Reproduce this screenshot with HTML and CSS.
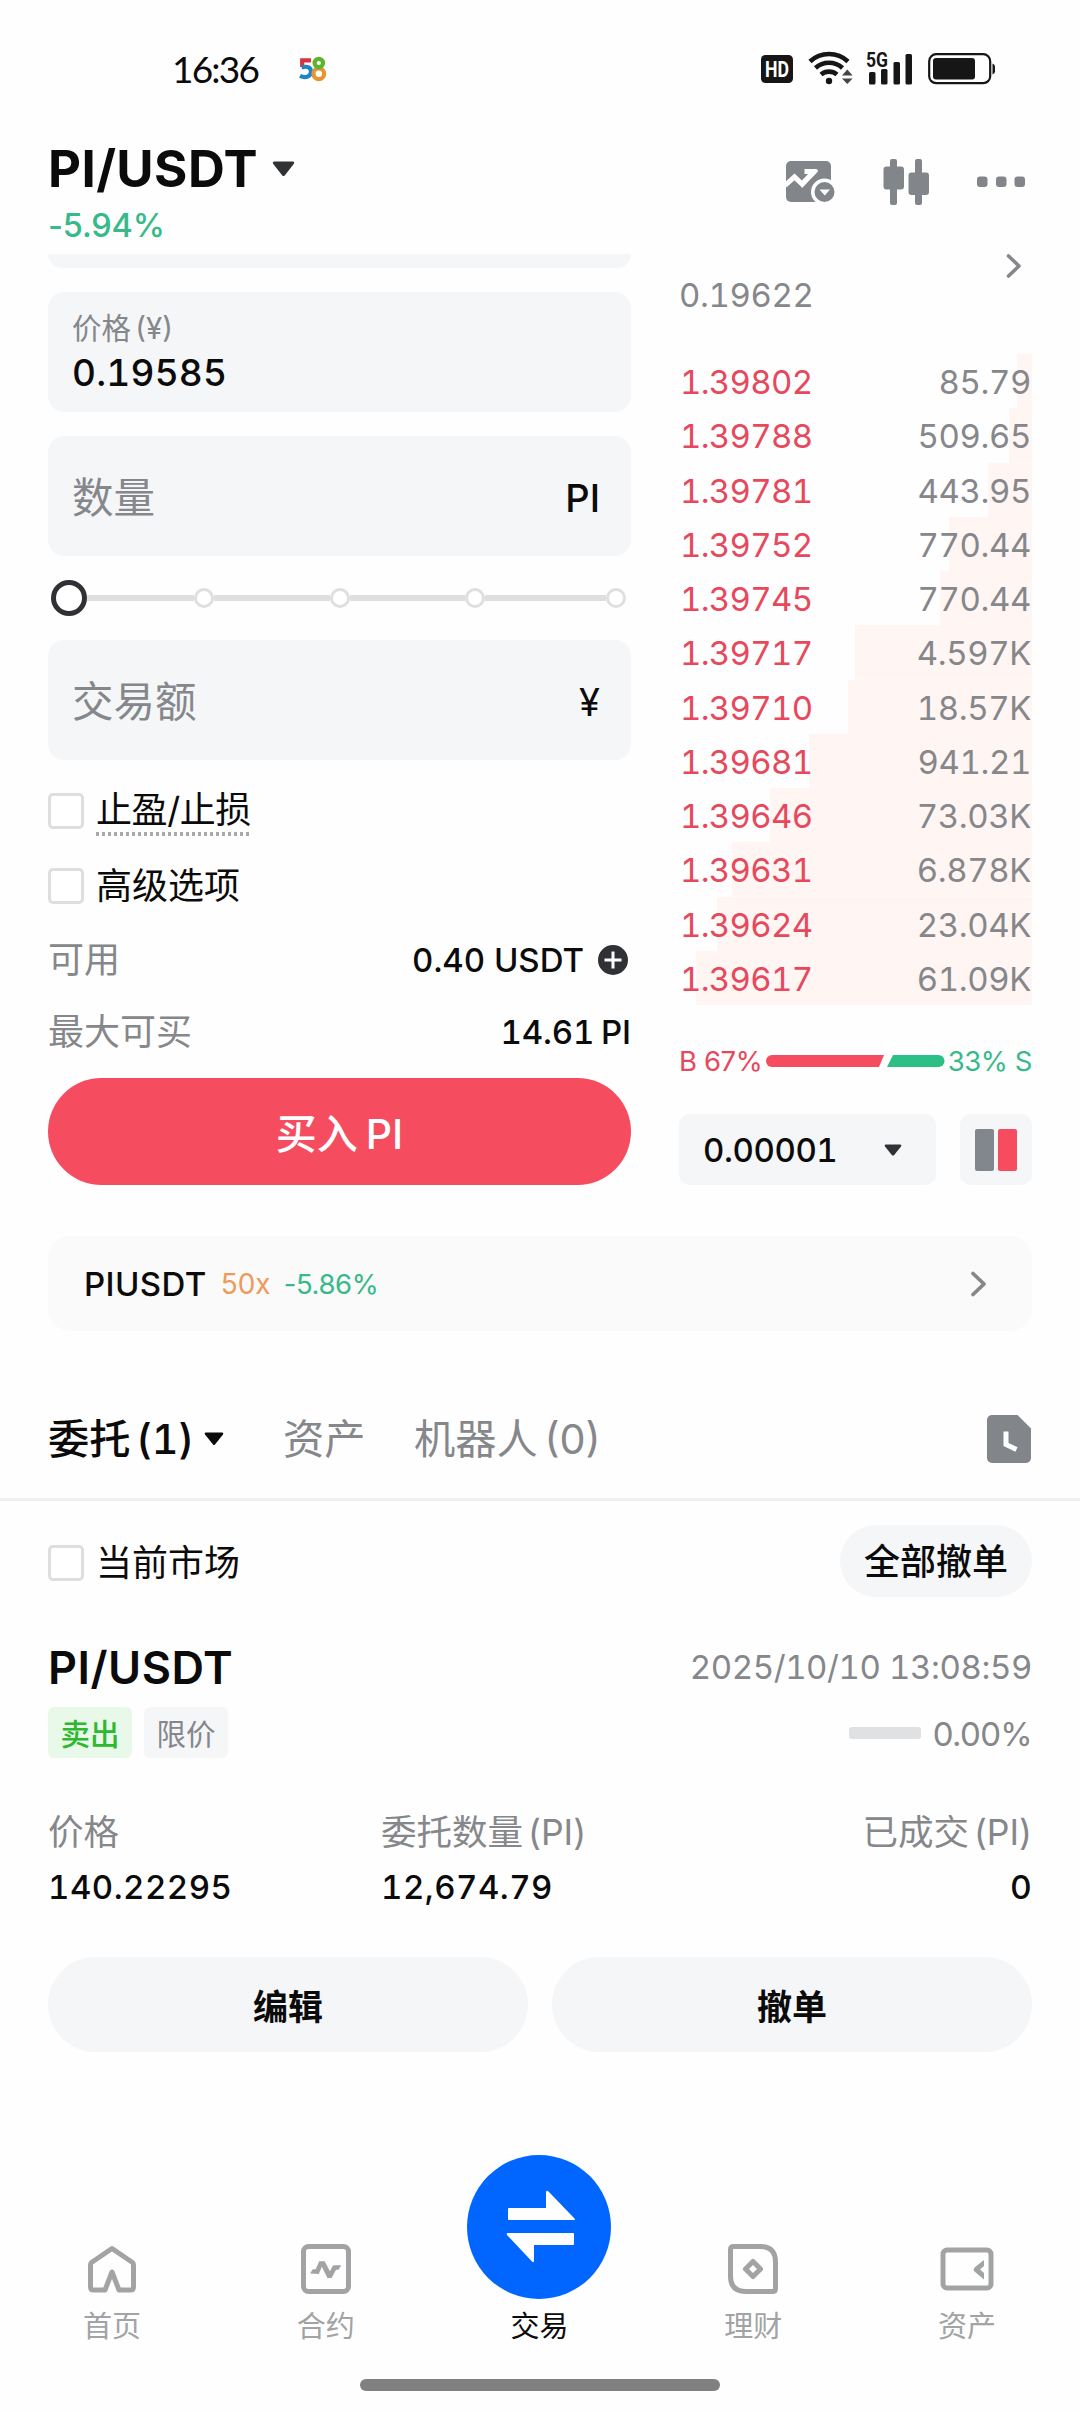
FILE: index.html
```html
<!DOCTYPE html>
<html lang="zh-CN">
<head>
<meta charset="utf-8">
<title>PI/USDT</title>
<link rel="stylesheet" href="styles.css">
</head>
<body>
<div class="status">
  <span class="clock">16:36</span>
  <svg class="app58" width="28" height="26" viewBox="0 0 28 26" fill="none" stroke-width="4.2">
    <path d="M12 4.300H3.200V11" stroke="#d9333f"/>
    <path d="M2.600 11.600c6-2.200 9.400.4 9.400 4.200 0 5.200-6.200 6.400-11 4" stroke="#1d84c6"/>
    <circle cx="19.800" cy="17.800" r="5.300" stroke="#ea9430"/>
    <circle cx="19.800" cy="7" r="4.200" stroke="#5db52f"/>
  </svg>
  <div class="status-icons">
    <svg class="hd" width="32" height="28" viewBox="0 0 32 28"><rect width="32" height="28" rx="4.500" fill="#161616"/><text x="4" y="22.300" textLength="24" lengthAdjust="spacingAndGlyphs">HD</text></svg>
    <svg class="wifi" width="46" height="36" viewBox="0 0 46 36">
      <g fill="none" stroke="#161616" stroke-width="4.600">
        <path d="M2 12.500a28 28 0 0 1 38 0"/>
        <path d="M7.500 19a20 20 0 0 1 27 0"/>
        <path d="M13 25.500a12.500 12.500 0 0 1 16 0"/>
      </g>
      <circle cx="21" cy="32" r="3.200" fill="#161616"/>
      <path d="M34 26.500l5.300-6 5.300 6zM34 29.500h10.600l-5.300 5.500z" fill="#444"/>
    </svg>
    <svg class="signal" width="47" height="34" viewBox="0 0 47 34" fill="#161616">
      <rect x="3" y="20" width="6.500" height="12.500" rx="1.500"/>
      <rect x="15" y="17" width="6.500" height="15.500" rx="1.500"/>
      <rect x="27.500" y="10" width="6.500" height="22.500" rx="1.500"/>
      <rect x="39.500" y="2" width="6.500" height="30.500" rx="1.500"/>
      <text x="0" y="15.200" textLength="22" lengthAdjust="spacingAndGlyphs">5G</text>
    </svg>
    <svg class="battery" width="68" height="32" viewBox="0 0 68 32">
      <rect x="1.200" y="1.200" width="61" height="29" rx="7" fill="none" stroke="#161616" stroke-width="2.200"/>
      <rect x="5" y="5" width="42" height="21.500" rx="3" fill="#161616"/>
      <path d="M64.500 10.500q2.500 1 2.500 3v5q0 2-2.500 3z" fill="#161616"/>
    </svg>
  </div>
</div>

<header class="head">
  <div>
    <h1 class="pair">PI/USDT<svg width="23" height="16" viewBox="0 0 23 16"><path d="M2 .5h19q2 .6.700 2.500l-9 11.500q-1.200 1.200-2.400 0L1.300 3Q0 1.100 2 .5z" fill="#303236"/></svg></h1>
    <div class="change">-5.94%</div>
  </div>
  <div class="tools">
    <svg width="51" height="46" viewBox="0 0 51 46">
      <rect x="1" y="2" width="45" height="41" rx="5" fill="#82868a"/>
      <path d="M0 26.500l9.500-8.500 7.500 7 12-12.500" fill="none" stroke="#fff" stroke-width="5"/>
      <path d="M19.500 10h11.500q2.800.5 1.500 3L17 29l-2-5L25 15H19.500z" fill="#fff"/>
      <circle cx="39.500" cy="33" r="13.500" fill="#fefefe"/>
      <circle cx="39.500" cy="33" r="10" fill="#82868a"/>
      <path d="M34.500 30.500h10.500l-5.200 6z" fill="#fff"/>
    </svg>
    <svg width="47" height="46" viewBox="0 0 47 46" fill="#82868a">
      <rect x="7" y="0" width="7" height="46" rx="2"/><rect x="0.500" y="7.500" width="20.500" height="23" rx="3"/>
      <rect x="32" y="0" width="7" height="46" rx="2"/><rect x="25.500" y="13.500" width="20.500" height="22.500" rx="3"/>
    </svg>
    <svg width="49" height="46" viewBox="0 0 49 46" fill="#82868a">
      <rect x="0" y="17.500" width="10.500" height="10.500" rx="3"/><rect x="19" y="17.500" width="10.500" height="10.500" rx="3"/><rect x="37.500" y="17.500" width="10.500" height="10.500" rx="3"/>
    </svg>
  </div>
</header>

<main class="trade">
  <section class="form">
    <div class="stub"></div>
    <div class="field two">
      <span class="flabel">价格 (¥)</span>
      <span class="fvalue num">0.19585</span>
    </div>
    <div class="field"><span class="ph">数量</span><span class="unit">PI</span></div>
    <div class="slider">
      <i class="knob"></i><i class="seg first"></i><i class="dot"></i><i class="seg"></i><i class="dot"></i><i class="seg"></i><i class="dot"></i><i class="seg last"></i><i class="dot"></i>
    </div>
    <div class="field"><span class="ph">交易额</span><span class="unit yen">¥</span></div>
    <div class="check first"><i class="box"></i><span class="dotted">止盈/止损</span></div>
    <div class="check"><i class="box"></i><span>高级选项</span></div>
    <div class="info available"><span class="muted">可用</span><span class="amount num">0.40 USDT
      <svg width="30" height="30" viewBox="0 0 30 30"><circle cx="15" cy="15" r="15" fill="#2f3135"/><path d="M15 6.500v17M6.500 15h17" stroke="#fff" stroke-width="3"/></svg></span></div>
    <div class="info"><span class="muted">最大可买</span><span class="amount max num">14.61 PI</span></div>
    <div class="buy">买入 PI</div>
  </section>

  <section class="side">
    <div class="index">
      <svg width="16" height="24" viewBox="0 0 16 24"><path d="M2.500 2l10.500 10-10.500 10" fill="none" stroke="#85878a" stroke-width="3.600" stroke-linecap="round" stroke-linejoin="round"/></svg>
      <span class="fiat num">0.19622</span>
    </div>
    <div class="book num">
      <div class="row" style="--depth:15px"><b>1.39802</b><span>85.79</span></div>
      <div class="row" style="--depth:23px"><b>1.39788</b><span>509.65</span></div>
      <div class="row" style="--depth:44px"><b>1.39781</b><span>443.95</span></div>
      <div class="row" style="--depth:83px"><b>1.39752</b><span>770.44</span></div>
      <div class="row" style="--depth:92px"><b>1.39745</b><span>770.44</span></div>
      <div class="row" style="--depth:177px"><b>1.39717</b><span>4.597K</span></div>
      <div class="row" style="--depth:184px"><b>1.39710</b><span>18.57K</span></div>
      <div class="row" style="--depth:223px"><b>1.39681</b><span>941.21</span></div>
      <div class="row" style="--depth:262px"><b>1.39646</b><span>73.03K</span></div>
      <div class="row" style="--depth:300px"><b>1.39631</b><span>6.878K</span></div>
      <div class="row" style="--depth:315px"><b>1.39624</b><span>23.04K</span></div>
      <div class="row" style="--depth:336px"><b>1.39617</b><span>61.09K</span></div>
    </div>
    <div class="ratio">
      <span class="red">B 67%</span>
      <svg width="179" height="12" viewBox="0 0 179 12"><path d="M6 0H118l-5 12H6A6 6 0 0 1 6 0z" fill="#f64c5f"/><path d="M127 0h45.500a6 6 0 0 1 0 12H121z" fill="#2cbf86"/></svg>
      <span class="green">33% S</span>
    </div>
    <div class="controls">
      <div class="step"><span class="num">0.00001</span><svg width="18" height="12" viewBox="0 0 18 12"><path d="M1.500.5h15q1.500.5.5 2l-6.800 8.500q-1.200 1-2.400 0L1 2.500Q0 1 1.500.5z" fill="#303236"/></svg></div>
      <div class="mode"><i class="grey"></i><i class="redbar"></i></div>
    </div>
  </section>
</main>

<div class="perp">
  <span class="pname">PIUSDT</span><span class="lev">50x</span><span class="pchg">-5.86%</span>
  <svg width="18" height="26" viewBox="0 0 18 26"><path d="M3 2.500l11 10.500-11 10.500" fill="none" stroke="#85878a" stroke-width="3.800" stroke-linecap="round" stroke-linejoin="round"/></svg>
</div>

<nav class="tabs">
  <span class="tab active"><span>委托 (<span class="num">1</span>)</span><svg width="20" height="14" viewBox="0 0 20 14"><path d="M1.500.5h17q1.500.5.5 2l-8 10q-1 1-2 0l-8-10Q0 1 1.500.5z" fill="#0b0b0b"/></svg></span>
  <span class="tab assets">资产</span>
  <span class="tab bots">机器人 (0)</span>
  <svg class="history" width="44" height="48" viewBox="0 0 44 48"><path d="M5 0h25.500L44 13.500V43a5 5 0 0 1-5 5H5a5 5 0 0 1-5-5V5a5 5 0 0 1 5-5z" fill="#82868a"/><path d="M19 16.500v13l10.500 5" fill="none" stroke="#fff" stroke-width="5"/></svg>
</nav>

<section class="orders">
  <div class="filter">
    <div class="check"><i class="box"></i><span>当前市场</span></div>
    <span class="pill">全部撤单</span>
  </div>
  <div class="otitle"><span class="opair">PI/USDT</span><span class="date num">2025/10/10 13:08:59</span></div>
  <div class="otags"><span class="tag sell">卖出</span><span class="tag">限价</span><i class="track"></i><span class="pct">0.00%</span></div>
  <div class="ocols">
    <div><p>价格</p><strong class="num">140.22295</strong></div>
    <div><p>委托数量 (PI)</p><strong class="num">12,674.79</strong></div>
    <div class="right"><p>已成交 (PI)</p><strong>0</strong></div>
  </div>
  <div class="actions"><span class="btn">编辑</span><span class="btn">撤单</span></div>
</section>

<nav class="bottom">
  <div class="item">
    <svg width="54" height="54" viewBox="0 0 54 54" fill="none" stroke="#a1a3a4" stroke-width="5" stroke-linejoin="round"><path d="M27 6.500L47.500 20.500Q48.500 21.500 48.500 23V45Q48.500 48 45.500 48H34L27 30 20 48H8.500Q5.500 48 5.500 45V23Q5.500 21.500 6.500 20.500z"/></svg>
    <span>首页</span>
  </div>
  <div class="item">
    <svg width="54" height="54" viewBox="0 0 54 54"><rect x="4.500" y="4.500" width="45" height="45" rx="5" fill="none" stroke="#a1a3a4" stroke-width="5"/><path d="M11 31.500l2.800-4.200h2.900l3.500-8h5.500l5.200 10 2.400-4.600q.6-1.400 2-1.400h7l-2.800 4.500h-2.500L32.600 36h-4.200L22.900 24.700 19.800 32z" fill="#a1a3a4"/></svg>
    <span>合约</span>
  </div>
  <div class="item current">
    <svg width="144" height="144" viewBox="0 0 144 144"><circle cx="72" cy="72" r="72" fill="#0066ff"/><path d="M42 53H79V37Q79.500 35 81.500 36.500L107.500 63.500Q108.500 65 107 65H42Q41 65 41 64V54Q41 53 42 53zM106 78H41Q39 78 40 80L65 106.500Q67 108 67 106V90H106Q107 90 107 89V79Q107 78 106 78z" fill="#fff"/></svg>
    <span>交易</span>
  </div>
  <div class="item">
    <svg width="54" height="54" viewBox="0 0 54 54" fill="none" stroke="#a1a3a4" stroke-width="5"><path d="M7.500 4.500H34Q49.500 4.500 49.500 20V46.500Q49.500 49.500 46.500 49.500H20Q4.500 49.500 4.500 34V7.500Q4.500 4.500 7.500 4.500z"/><path d="M27 19.500l7.500 7.500-7.500 7.500-7.500-7.500z" stroke-linejoin="round"/></svg>
    <span>理财</span>
  </div>
  <div class="item">
    <svg width="54" height="54" viewBox="0 0 54 54"><rect x="3" y="8" width="48" height="38" rx="4" fill="none" stroke="#a1a3a4" stroke-width="5"/><path d="M44 18v6l-4 3.500 4 3.500v6.500l-9.500-8q-1.500-2 0-4z" fill="#a1a3a4"/></svg>
    <span>资产</span>
  </div>
</nav>
<div class="homebar"></div>
</body>
</html>
```
FILE: styles.css
```css
* { box-sizing: border-box; }

body {
  margin: 0;
  width: 1080px;
  height: 2412px;
  overflow: hidden;
  display: flex;
  flex-direction: column;
  background: #fefefe;
  color: #0b0b0b;
  font-family: Inter, "Noto Sans CJK SC", sans-serif;
  font-size: 33px;
}

svg { display: block; flex: none; overflow: visible; }
i { display: block; flex: none; }
p { margin: 0; }
.num { font-feature-settings: "tnum"; }

/* status bar */
.status {
  height: 140px;
  padding: 0 84px 0 172px;
  display: flex;
  align-items: center;
}
.clock { font: 400 37px/40px Lato, sans-serif; letter-spacing: -1.8px; width: 127px; }
.status > * { margin-bottom: 2px; }
.status > .clock { margin-bottom: 2px; }
.status-icons { margin-left: auto; display: flex; align-items: center; }
.hd text { font: 700 22.5px Roboto, sans-serif; fill: #fff; }
.wifi { margin-left: 15px; margin-top: -4px; }
.signal { margin-left: 12px; }
.signal text { font: 700 20.5px Roboto, sans-serif; stroke: #fefefe; stroke-width: 2px; paint-order: stroke; }
.battery { margin-left: 15px; }

/* header */
.head {
  height: 114px;
  padding: 0 54px 0 48px;
  display: flex;
  justify-content: space-between;
}
.pair {
  margin: 0;
  font-size: 51px; font-weight: 700; line-height: 58px; letter-spacing: .4px;
  display: flex; align-items: center; gap: 14px;
}
.change { font-size: 32.5px; line-height: 36px; margin-top: 10px; letter-spacing: -.2px; color: #37b98a; font-weight: 500; }
.tools { display: flex; gap: 47px; margin-top: 19px; height: 46px; }

/* trade area */
.trade {
  padding: 0 48px;
  display: grid;
  grid-template-columns: 583px 1fr;
  column-gap: 48px;
  height: 982px;
}
.form, .side { display: flex; flex-direction: column; }
.stub { height: 14px; background: #f4f6f7; border-radius: 0 0 16px 16px; }
.field {
  height: 120px; margin-top: 24px; padding: 3px 31px 0 24px;
  background: #f4f6f8; border-radius: 16px;
  display: flex; justify-content: space-between; align-items: center;
}
.field.two { flex-direction: column; align-items: flex-start; justify-content: flex-start; padding-top: 16px; }
.flabel { font-size: 29.5px; line-height: 41px; color: #85878a; word-spacing: -4px; }
.fvalue { font-size: 37px; line-height: 44px; margin-top: 2px; font-weight: 500; letter-spacing: .2px; }
.ph { font-size: 41.5px; line-height: 60px; color: #85878a; }
.unit { font-size: 38px; font-weight: 500; }
.unit.yen { font-weight: 400; }
.slider { height: 84px; padding: 0 5px 0 3px; display: flex; align-items: center; }
.slider + .field { margin-top: 0; }
.knob { width: 36px; height: 36px; border: 5px solid #303134; border-radius: 50%; background: #fff; }
.dot { width: 20px; height: 20px; border: 3px solid #dfdfdf; border-radius: 50%; background: #fff; }
.seg { flex: 1; height: 6px; background: #dfdfdf; }
.seg.first { flex: none; width: 107px; }
.seg.last { flex: none; width: 121px; }
.check { display: flex; align-items: center; height: 36px; margin-top: 39px; font-size: 36px; line-height: 38px; gap: 12px; }
.check.first { margin-top: 33px; }
.box { width: 36px; height: 36px; border: 3px solid #dedede; border-radius: 5px; background: #fff; }
.dotted { height: 60px; line-height: 50px; letter-spacing: -.4px; margin-top: 8px; background: repeating-linear-gradient(90deg, #a9a9a9 0 3px, transparent 3px 6px) 0 47px / 100% 4px no-repeat; }
.info { display: flex; justify-content: space-between; align-items: center; height: 36px; margin-top: 36px; line-height: 38px; }
.info.available { margin-top: 38px; }
.muted { font-size: 36px; color: #85878a; }
.amount { display: flex; align-items: center; gap: 14px; padding-right: 3px; font-weight: 500; line-height: 36px; }
.amount.max { padding-right: 0; word-spacing: -2px; letter-spacing: -.1px; }
.buy {
  margin-top: 28px; height: 107px; border-radius: 54px;
  background: #f64c5f; color: #fff;
  font-size: 41px; line-height: 112px; font-weight: 500; text-align: center; word-spacing: -3px;
}

.index { height: 100px; color: #85878a; display: flex; flex-direction: column; }
.index svg { align-self: flex-end; margin-right: 10px; }
.fiat { line-height: 40px; margin-top: -3px; letter-spacing: -.4px; }
.book { letter-spacing: -.4px; }
.row {
  height: 54.25px; line-height: 56.5px;
  padding: 0 1px;
  display: flex; justify-content: space-between;
  color: #85878a;
  background: linear-gradient(#fff5f3, #fff5f3) right / var(--depth) 100% no-repeat;
}
.row b { font-weight: 400; letter-spacing: -.7px; color: #e6485c; }
.ratio { margin-top: 40px; height: 32px; display: flex; align-items: center; justify-content: space-between; font-size: 27.5px; letter-spacing: -.4px; }
.red { color: #e6485c; }
.green { color: #37b98a; }
.controls { margin-top: 37px; display: flex; justify-content: space-between; }
.step { width: 257px; height: 71px; border-radius: 11px; background: #f4f6f8; padding: 0 34px 0 24px; display: flex; align-items: center; justify-content: space-between; font-weight: 500; letter-spacing: -.4px; line-height: 42px; }
.mode { width: 72px; height: 71px; border-radius: 11px; background: #f4f6f8; display: flex; justify-content: center; align-items: center; gap: 4px; }
.grey, .redbar { width: 19px; height: 42px; border-radius: 2px; background: #82868d; }
.redbar { background: #f64c5f; }

/* perpetual link */
.perp {
  margin: 0 48px; height: 95px; padding: 0 44px 0 36px;
  border-radius: 22px; background: #fafafa;
  display: flex; align-items: center;
}
.pname { font-weight: 500; letter-spacing: .4px; }
.lev { margin-left: 14px; font-size: 28px; color: #ee9a5c; }
.pchg { margin-left: 13px; font-size: 27.5px; letter-spacing: -.4px; color: #37b98a; }
.perp svg { margin-left: auto; }

/* tabs */
.tabs {
  height: 170px; padding: 78px 49px 29px 48px;
  border-bottom: 3px solid #efefef;
  display: flex; align-items: center;
  font-size: 41.3px; line-height: 60px; color: #85878a;
  word-spacing: -5px;
}
.tab { width: 235px; }
.active { color: #0b0b0b; font-weight: 500; display: flex; align-items: center; gap: 10px; }
.assets { width: 131px; }
.history { margin-left: auto; }

/* orders */
.orders { padding: 24px 48px 0; }
.filter { display: flex; justify-content: space-between; align-items: center; height: 72px; }
.filter .check { margin: 4px 0 0; }
.pill { width: 192px; height: 72px; border-radius: 36px; background: #f4f6f8; font-size: 36px; font-weight: 500; line-height: 75px; text-align: center; }
.otitle { margin-top: 43px; height: 54px; display: flex; justify-content: space-between; align-items: center; }
.opair { font-size: 45px; font-weight: 600; letter-spacing: .5px; }
.date { color: #85878a; letter-spacing: -.4px; }
.otags { margin-top: 13px; height: 51px; display: flex; align-items: center; gap: 12px; }
.tag { width: 84px; height: 51px; border-radius: 6px; background: #f4f6f8; color: #85878a; font-size: 29.5px; line-height: 54px; text-align: center; }
.tag.sell { background: #e9f9e9; color: #2db830; font-weight: 500; }
.track { width: 72px; height: 12px; border-radius: 3px; background: #dfe1e2; margin-left: auto; }
.pct { color: #85878a; line-height: 54px; letter-spacing: -.7px; margin-top: 2px; }
.ocols { margin-top: 52px; display: grid; grid-template-columns: 333px 1fr 1fr; }
.ocols p { font-size: 35.5px; line-height: 45px; color: #85878a; word-spacing: -5px; }
.ocols strong { display: block; margin-top: 10px; font-weight: 500; line-height: 44px; letter-spacing: .5px; }
.right { text-align: right; }
.actions { margin-top: 48px; display: grid; grid-template-columns: 1fr 1fr; gap: 24px; }
.btn { height: 95px; border-radius: 48px; background: #f4f6f8; font-size: 35px; font-weight: 700; line-height: 101px; text-align: center; }

/* bottom navigation */
.bottom {
  margin-top: 103px; padding: 0 6px 0 5px; height: 190px;
  display: grid; grid-template-columns: repeat(5, 1fr); align-items: end;
  font-size: 29px; line-height: 40px; color: #a1a3a4;
}
.item { display: flex; flex-direction: column; align-items: center; gap: 11px; margin-bottom: -2px; }
.current { color: #0b0b0b; gap: 8px; }
.homebar { width: 360px; height: 12px; border-radius: 6px; background: #808080; margin: 34px auto 0; }
```
